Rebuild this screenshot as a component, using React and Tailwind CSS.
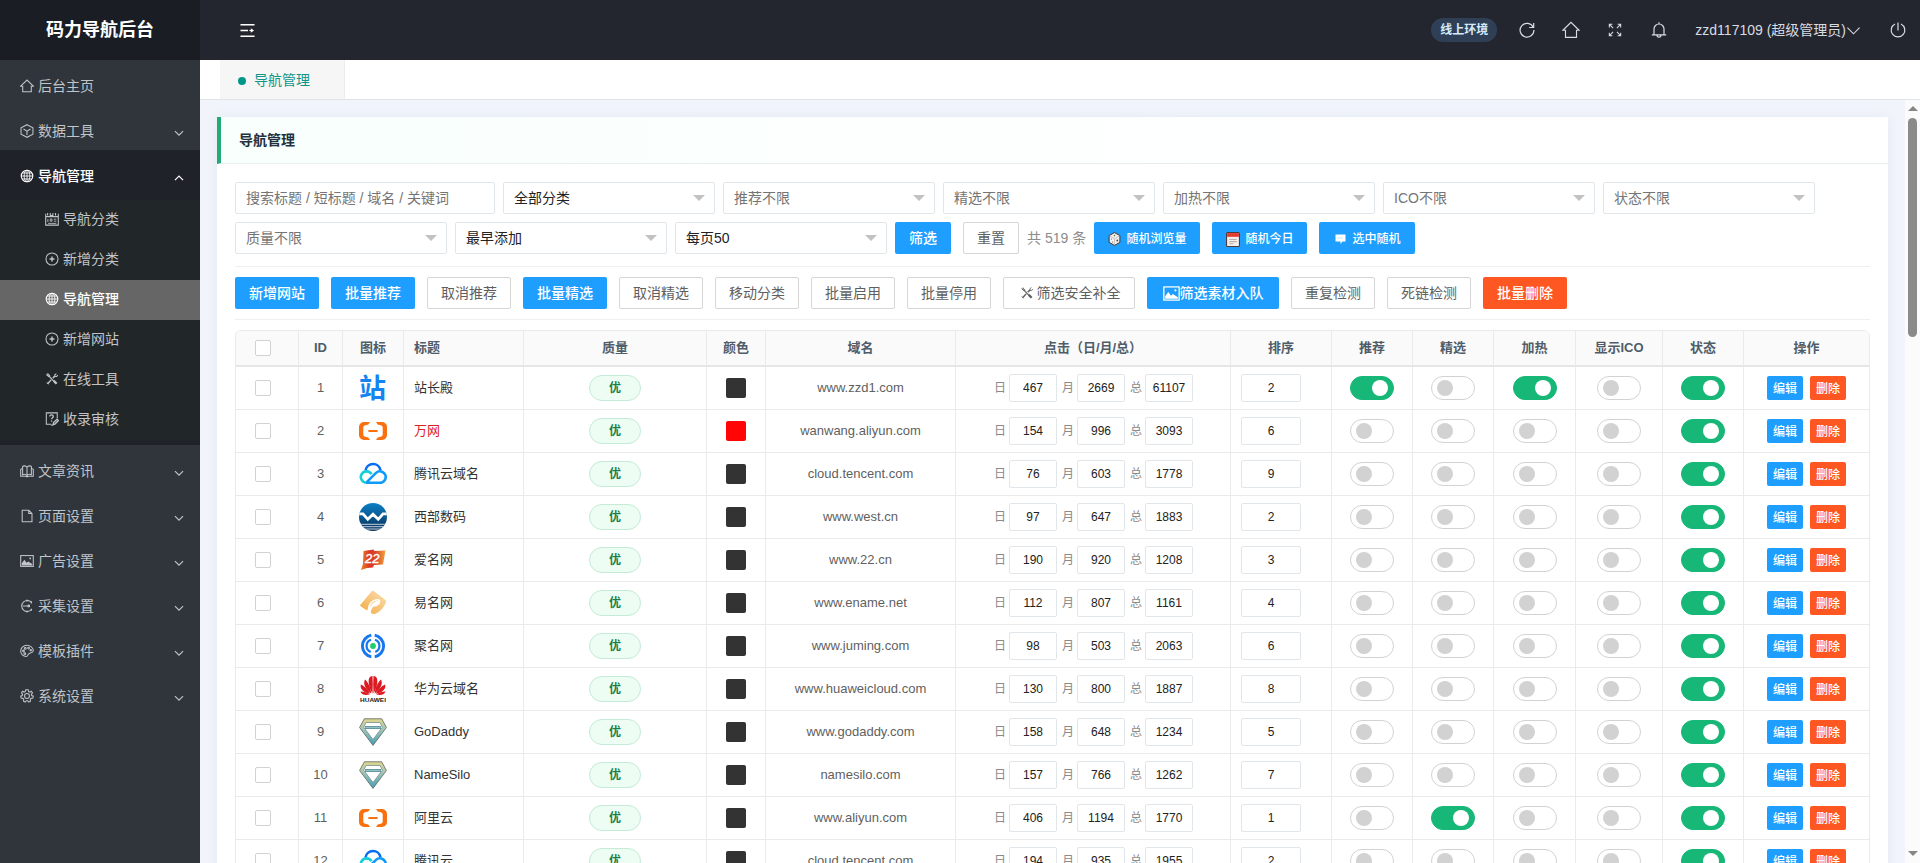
import { useState } from 'react';
import clsx from 'clsx';

function Svg({ size = 14, className, children, sw = 1.2 }) {
  return (
    <svg width={size} height={size} viewBox="0 0 16 16" fill="none" stroke="currentColor" strokeWidth={sw} className={clsx('shrink-0', className)}>
      {children}
    </svg>
  );
}

const icons = {
  home: <path d="M.8 8.2 8 1.2l7.200 7H12.900v6.300H3.100V8.200z" />,
  cube: <><path d="M8 .8 14.800 4.400v7.200L8 15.200 1.200 11.600V4.400z" /><path d="M4 5.800 8 8.100 12 5.800M8 8.100v4.400" /></>,
  globe: <><circle cx="8" cy="8" r="6.600" strokeWidth="1.300" /><ellipse cx="8" cy="8" rx="3.300" ry="6.600" strokeWidth="1" /><path d="M8 1.400v13.200M1.400 8h13.200M2.500 4.600h11M2.500 11.400h11" strokeWidth="1" /></>,
  template: <><path d="M.8 2v13h14.400V2M.8 5.300h14.400M3 1v3M6 1v3h3V1M12 1v3" /><path d="M3.300 8v3.500M6 8h2v2.500H6zM10 8.200h3M10 10.500h3M3.500 13H13" strokeWidth="1" /></>,
  add: <><circle cx="8" cy="8" r="6.900" /><path d="M8 5.200v5.600M5.200 8h5.600" strokeWidth="1.700" /></>,
  tools: <><path d="m4 4 8.500 9.200" strokeWidth="1.300" /><path d="m10 10 3.300 3.500" strokeWidth="2.600" /><path d="m7 9-4 4.500M9 7l2.300-2.500" strokeWidth="1.700" /><path d="M13 1.800 11.200 3.200l.3 1.800 1.900.1 1.200-1.700M2 3.300l1.300-1.300 2 2.300-.9.900zM2 12l2 2" /></>,
  audit: <><path d="M14 7V1H1.500v13H7" /><path d="M5.500 5.200c0-2.600 4-2.300 4 0 0 1.500-2 1.500-2 3.200M7.500 9.800v1.300" strokeWidth="1.500" /><path d="m9.300 14.500.5-2.500 4-3.800 1.500 1.600-4 4zM7 15h3" strokeWidth="1.500" /></>,
  book: <path d="M8 3.500C6.500 1.800 4 1.800 3 2.800v9.400c2-.8 3.800-.5 5 1.100zM8 3.500c1.500-1.700 4-1.700 5-.7v9.400c-2-.8-3.800-.5-5 1.100zM3 5 .8 6v8h5.700c.8 0 1 .8 1.500.8s.7-.8 1.500-.8h5.700V6L13 5" />,
  file: <path d="M2.500 1.500h7.500l3.700 3.700v9.300H2.500zM10 1.500v3.700h3.700" />,
  picture: <><rect x=".8" y="1.800" width="14.400" height="12.400" /><path d="M2 13v-2.500l3-4 2.500 3.500 1.800-1.500L14 11.500V13z" fill="currentColor" stroke="none" /><circle cx="11.700" cy="5" r="1" fill="currentColor" stroke="none" /></>,
  collect: <><path d="M13.500 4.500a6.300 6.300 0 1 0 0 7" /><path d="M3 8h7M8 .5v2.500M8 13v2.500M13 5V2.500M13 11v2.500" /><circle cx="10" cy="8" r="1" fill="currentColor" /></>,
  palette: <><path d="M8 1.500C3.500 1.500.8 4.500.8 8s2.700 6.300 6.200 6.300c2.500 0 1.500-2.500 3.200-3.200C12 10 15.200 10.500 15.200 7.500 15.200 4 11.500 1.500 8 1.500z" /><circle cx="4" cy="8" r="1" /><circle cx="6" cy="5" r="1" /><circle cx="9.800" cy="4.600" r="1" /><circle cx="12.300" cy="7" r=".8" /><circle cx="5.500" cy="11" r="1" /></>,
  gear: <><circle cx="8" cy="8" r="2.800" /><path d="m6.600.8-.4 2-1.500.7L3 2.500 1.700 4.400l1.300 1.600-.4 1.500L.8 8.200l.5 2.200 2 .3 1 1.300-.3 2 2 .9 1.300-1.500h1.400l1.300 1.500 2-.9-.3-2 1-1.300 2-.3.500-2.200-1.800-.7-.4-1.500 1.300-1.600L13 2.500l-1.700 1.100-1.500-.7-.4-2z" /></>,
  fold: <><path d="M.5 1.800h15M.5 8h8M.5 14.200h15" strokeWidth="1.700" /><path d="M10 8h2.500" strokeWidth="1.200" /><path d="m11.500 5.500 3.500 2.500-3.500 2.500z" fill="currentColor" stroke="none" /></>,
  refresh: <path d="M14.200 5.200A6.900 6.900 0 1 0 14.900 8M14.700 1v4.500h-4.500" />,
  full: <path d="M5.800 5.800 1.700 1.700M1.500 5V1.500H5M10.200 5.800l4.100-4.100M11 1.500h3.500V5M5.800 10.200l-4.100 4.100M1.500 11v3.500H5M10.200 10.200l4.100 4.100M14.500 11v3.500H11" />,
  bell: <path d="M.8 12.800h14.400M3 12.800V7a5 5 0 0 1 10 0v5.800M8 2V.3M6 13c0 2.800 4 2.800 4 0" />,
  power: <path d="M5 2A6.800 6.800 0 1 0 11 2M8 .5v8" />,
  down: <path d="m1.500 5 6.500 6.500L14.500 5" />,
  up: <path d="m1.500 11.500 6.500-6.500 6.500 6.500" />,
};

function Icon({ name, ...rest }) {
  return <Svg {...rest}>{icons[name]}</Svg>;
}

const subMenu = [
  ['template', '导航分类'],
  ['add', '新增分类'],
  ['globe', '导航管理'],
  ['add', '新增网站'],
  ['tools', '在线工具'],
  ['audit', '收录审核'],
];

const menu = [
  { icon: 'home', text: '后台主页' },
  { icon: 'cube', text: '数据工具', more: true },
  { icon: 'globe', text: '导航管理', more: true, children: subMenu },
  { icon: 'book', text: '文章资讯', more: true },
  { icon: 'file', text: '页面设置', more: true },
  { icon: 'picture', text: '广告设置', more: true },
  { icon: 'collect', text: '采集设置', more: true },
  { icon: 'palette', text: '模板插件', more: true },
  { icon: 'gear', text: '系统设置', more: true },
];

function Sidebar() {
  return (
    <aside className="w-[200px] shrink-0 bg-[#2f353b] flex flex-col">
      <div className="h-[60px] shrink-0 bg-[#1a1d24] text-white text-lg font-bold flex items-center justify-center pb-2.5 pt-2.5">码力导航后台</div>
      {menu.map(m => (
        <div key={m.text} className={clsx(m.children ? 'bg-[#1f2329] text-white font-medium pb-[5px]' : 'text-[#c1c4c8]')}>
          <div className="h-[45px] pt-[7px] pl-5 pr-4 flex items-center">
            <Icon name={m.icon} />
            <span className="ml-1 flex-1">{m.text}</span>
            {m.more && <Icon name={m.children ? 'up' : 'down'} size={10} sw={1.900} className="mt-[3px]" />}
          </div>
          {m.children && (
            <div className="mt-[5px] bg-[#212629]">
              {m.children.map(([icon, text]) => (
                <div key={text} className={clsx('h-10 pl-[45px] pb-0.5 flex items-center gap-1', text === '导航管理' ? 'bg-[#666] text-white' : 'text-[#c1c4c8] font-normal')}>
                  <Icon name={icon} />
                  <span>{text}</span>
                </div>
              ))}
            </div>
          )}
        </div>
      ))}
    </aside>
  );
}

function Header() {
  return (
    <header className="h-[60px] shrink-0 bg-[#23262e] text-[#d9dbe2] flex items-center pl-10 pr-[14px]">
      <Icon name="fold" size={15} className="text-white" />
      <div className="ml-auto flex items-center">
        <span className="h-6 w-[66px] rounded-full bg-[#2f4056] text-[#d6ebfb] text-xs font-bold flex items-center justify-center mr-[22px]">线上环境</span>
        <Icon name="refresh" size={16} className="mr-[27px]" />
        <Icon name="home" size={18} sw={1} className="mr-[28px]" />
        <Icon name="full" size={14} className="mr-[29px]" />
        <Icon name="bell" size={16} className="mr-[28px]" />
        <span>zzd117109 (超级管理员)</span>
        <Icon name="down" size={15} className="mr-[29px]" />
        <Icon name="power" size={16} />
      </div>
    </header>
  );
}

function SelectBox({ text, dark }) {
  return (
    <div className={clsx('w-[212px] h-8 border border-[#e0e6ea] rounded-[2px] bg-white px-2.5 flex items-center justify-between', dark ? 'text-[#222]' : 'text-[#757575]')}>
      <span>{text}</span>
      <span className="border-x-6 border-t-6 border-x-transparent border-t-[#c2c2c2] -mr-px" />
    </div>
  );
}

function Btn({ children, kind = 'plain', className }) {
  const kinds = {
    plain: 'bg-white border border-[#d6d6d6] text-[#5f5f5f]',
    blue: 'bg-[#1e9fff] text-white font-medium',
    red: 'bg-[#ff5722] text-white font-medium',
  };
  return <button type="button" className={clsx('h-8 rounded-[2px] flex items-center justify-center whitespace-nowrap', kinds[kind], className)}>{children}</button>;
}

function Dice() {
  return (
    <svg width="13" height="14" viewBox="0 0 12 14">
      <path d="M6 .6 11.400 3.600v6.800L6 13.400.6 10.400V3.600z" fill="#f4f1ee" stroke="#3d3434" strokeWidth="1" />
      <path d="M6 6.800v6M6 6.800 1 3.900M6 6.800l5-2.900" stroke="#b9b1ad" strokeWidth=".7" />
      <circle cx="6" cy="3.600" r=".8" fill="#666" /><circle cx="3" cy="7" r=".6" fill="#666" /><circle cx="4" cy="10" r=".6" fill="#666" /><circle cx="8.800" cy="8.500" r=".9" fill="#444" />
    </svg>
  );
}

function Calendar() {
  return (
    <svg width="14" height="15" viewBox="0 0 13 14">
      <rect x=".5" y=".5" width="12" height="13" rx="1" fill="#f5efec" stroke="#4b3a3a" />
      <rect x="1" y="1" width="11" height="3.500" fill="#e23b2e" />
      <path d="M3 7h7M3 9h7M3 11h4" stroke="#b9afab" strokeWidth="1" />
    </svg>
  );
}

function Bubble() {
  return (
    <svg width="13" height="12" viewBox="0 0 12 12">
      <path d="M1 1.500h10v7H8L6 11V8.500H1z" fill="#fff" /><path d="M3 5h6" stroke="#8fc9f7" strokeWidth=".8" strokeDasharray="1 1" />
    </svg>
  );
}

function Filters() {
  return (
    <div className="pb-3 border-b border-[#edf0f2] flex flex-wrap gap-2">
      <input placeholder="搜索标题 / 短标题 / 域名 / 关键词" className="w-[260px] h-8 border border-[#e0e6ea] rounded-[2px] px-2.5 placeholder:text-[#757575]" />
      <SelectBox text="全部分类" dark />
      <SelectBox text="推荐不限" />
      <SelectBox text="精选不限" />
      <SelectBox text="加热不限" />
      <SelectBox text="ICO不限" />
      <SelectBox text="状态不限" />
      <SelectBox text="质量不限" />
      <SelectBox text="最早添加" dark />
      <SelectBox text="每页50" dark />
      <Btn kind="blue" className="w-14">筛选</Btn>
      <Btn className="w-14 ml-1">重置</Btn>
      <span className="w-[59px] leading-8 text-[#8c8c8c] whitespace-nowrap">共 519 条</span>
      <Btn kind="blue" className="w-[106px] text-xs gap-[5px] pt-0.5 pl-px"><Dice />随机浏览量</Btn>
      <Btn kind="blue" className="w-[95px] ml-1 text-xs gap-[5px] pt-0.5 pl-px"><Calendar />随机今日</Btn>
      <Btn kind="blue" className="w-24 ml-1 text-xs gap-[5px] pt-0.5 pl-px"><Bubble />选中随机</Btn>
    </div>
  );
}

function Toolbar() {
  return (
    <div className="py-2.5 border-b border-[#edf0f2] flex gap-3">
      <Btn kind="blue" className="w-[84px]">新增网站</Btn>
      <Btn kind="blue" className="w-[84px]">批量推荐</Btn>
      <Btn className="w-[84px]">取消推荐</Btn>
      <Btn kind="blue" className="w-[84px]">批量精选</Btn>
      <Btn className="w-[84px]">取消精选</Btn>
      <Btn className="w-[84px]">移动分类</Btn>
      <Btn className="w-[84px]">批量启用</Btn>
      <Btn className="w-[84px]">批量停用</Btn>
      <Btn className="w-[132px] gap-[3px] pl-0.5"><Icon name="tools" sw={1} />筛选安全补全</Btn>
      <Btn kind="blue" className="w-[132px]"><Icon name="picture" size={17} />筛选素材入队</Btn>
      <Btn className="w-[84px]">重复检测</Btn>
      <Btn className="w-[84px]">死链检测</Btn>
      <Btn kind="red" className="w-[84px]">批量删除</Btn>
    </div>
  );
}

function Aliyun() {
  return (
    <svg width="28" height="28" viewBox="0 0 28 28" fill="#f8700f">
      <path d="M11 5H5a5 5 0 0 0-5 5v8a5 5 0 0 0 5 5h6l-1.700-2.600-3.700-1A1.900 1.900 0 0 1 4.300 17.600v-7.200a1.900 1.900 0 0 1 1.300-1.800l3.700-1zM17 5h6a5 5 0 0 1 5 5v8a5 5 0 0 1-5 5h-6l1.700-2.600 3.700-1a1.900 1.900 0 0 0 1.300-1.800v-7.200a1.900 1.900 0 0 0-1.300-1.800l-3.700-1zM9.400 12.900h9.200v2.200H9.400z" />
    </svg>
  );
}

function Tencent() {
  return (
    <svg width="28" height="28" viewBox="0 0 28 28" fill="none" strokeWidth="2.600">
      <path d="M6.500 10.500a7.600 7.600 0 0 1 15-.3" stroke="#0a6cf5" />
      <path d="M12.500 14.200A5.700 5.700 0 1 0 7 22.700" stroke="#12cfd8" />
      <path d="M7 22.700h14a5.700 5.700 0 1 0-4-9.800L7.500 22.300" stroke="#0f9bfa" />
    </svg>
  );
}

function West() {
  return (
    <svg width="28" height="28" viewBox="0 0 28 28">
      <defs>
        <linearGradient id="west" x2="0" y2="1"><stop offset="0" stopColor="#0a80c6" /><stop offset="1" stopColor="#0b2f57" /></linearGradient>
        <clipPath id="westClip"><circle cx="14" cy="14" r="14" /></clipPath>
      </defs>
      <g clipPath="url(#westClip)">
        <path d="M0 0h28v28H0z" fill="url(#west)" />
        <path d="M-1 10.800h5l4.800 5.500 5.200-5 5.200 5 4.800-5.500H29" fill="none" stroke="#fff" strokeWidth="2.800" />
        <path d="M0 21.300h28M0 23.700h28M0 26h28" stroke="#c3d3e2" strokeWidth="1" />
      </g>
    </svg>
  );
}

function Aiming() {
  return (
    <svg width="28" height="28" viewBox="0 0 28 28">
      <defs><linearGradient id="aiming"><stop offset="0" stopColor="#e9861d" /><stop offset=".35" stopColor="#dc3527" /><stop offset=".6" stopColor="#de452a" /><stop offset="1" stopColor="#eea53c" /></linearGradient></defs>
      <path d="m4.500 5 10-1.500 1 1.500L26.500 4.500 24 18.500l-9 .5-1 2.500-6 .5-6 2 2-6z" fill="url(#aiming)" />
      <text x="6" y="17" fontSize="13" fontStyle="italic" fill="#fff" stroke="#fff" strokeWidth=".4" fontFamily="Liberation Sans">22</text>
    </svg>
  );
}

function Ename() {
  return (
    <svg width="28" height="28" viewBox="0 0 28 28">
      <defs><linearGradient id="ename" x1="1" x2="0" y2="1"><stop offset="0" stopColor="#fae0b4" /><stop offset="1" stopColor="#f4a93f" /></linearGradient></defs>
      <path d="M.8 16.500 12.500 2.500q1.500-1.300 3 0L26.500 11q1.300 1.500 0 3.500-4 8.500-11 10.500-5 .5-3-4.500c1.500-3.500 4.500-5 8-6.500.5-3.500-6-2-8.500 2.500L8 21.500q-4-2.500-7.200-5z" fill="url(#ename)" />
      <path d="M9.500 21.500c0-7 4.500-10.800 8.700-10.800 4.300 0 2.300 5.300-3 6.300" fill="none" stroke="#fff" strokeWidth="1.600" />
    </svg>
  );
}

function Juming() {
  return (
    <svg width="28" height="28" viewBox="0 0 28 28" fill="none" stroke="#1677ee" strokeWidth="2.900">
      <path d="M12.300 3.200a11 11 0 0 0 0 21.600M15.700 3.200a11 11 0 0 1 0 21.600" />
      <path d="M12 7.800a6.500 6.500 0 0 0-.3 12.200M16 7.800a6.500 6.500 0 0 1 .3 12.200" strokeWidth="2.200" />
      <circle cx="14" cy="14" r="2.900" fill="#1fcf6b" stroke="none" />
    </svg>
  );
}

function Huawei() {
  return (
    <svg width="28" height="28" viewBox="0 0 28 28">
      <g fill="#dc1a22">
        <path d="M13.500 18.500C9.500 12 8.500 4 11 2q1-.8 2.500-.9.600 8 0 17.400zM14.500 18.500c4-6.500 5-14.500 2.500-16.500q-1-.8-2.500-.9-.6 8 0 17.400z" />
        <path d="M12.300 18.500C6.500 14 3.700 9 6 4.500c3 2.500 5.700 8 6.300 14zM15.700 18.500c5.800-4.500 8.600-9.500 6.300-14-3 2.500-5.700 8-6.300 14z" />
        <path d="M11.300 18.800C4.300 17.500.8 14 1.800 9.500c4.200 2 8 5.800 9.500 9.300zM16.700 18.800c7-1.300 10.500-4.800 9.500-9.300-4.200 2-8 5.800-9.500 9.300z" />
        <path d="M10.800 19.600c-5.500 1.200-8.300-.1-9.300-3.100 3.500 0 6.800 1.100 9.300 3.100zM17.200 19.600c5.500 1.200 8.300-.1 9.300-3.100-3.500 0-6.800 1.100-9.300 3.100z" />
      </g>
      <text x="1" y="27" fontSize="6" fontWeight="bold" fill="#222" textLength="26" lengthAdjust="spacingAndGlyphs" fontFamily="Liberation Sans">HUAWEI</text>
    </svg>
  );
}

function Gem() {
  return (
    <svg width="28" height="28" viewBox="0 0 28 28" fill="none" strokeLinejoin="round">
      <defs><linearGradient id="gem" gradientUnits="userSpaceOnUse" x1="0" y1="0" x2="0" y2="28"><stop offset="0" stopColor="#e8d88a" /><stop offset=".4" stopColor="#a5c6b6" /><stop offset="1" stopColor="#3f9dba" /></linearGradient></defs>
      <path d="M5.300.8h17.400L27.400 9.500 14 27.400.6 9.500z" fill="url(#gem)" stroke="#66736a" strokeWidth=".9" />
      <path d="M7 4.500h14l2.300 4.800L14 21.500 4.700 9.300z" fill="#fff" stroke="#76908c" strokeWidth=".8" />
      <path d="M6 9.500h16" stroke="#5d8f96" strokeWidth="3" />
      <path d="M6.500 9.500h15" stroke="#8fc3c8" strokeWidth="1.400" />
    </svg>
  );
}

function Zhan() {
  return <span className="text-[27px] leading-7 font-bold text-[#1683f2] block w-7 h-7 pt-px">站</span>;
}

const columns = [
  ['', 'w-[63px]'], ['ID', 'w-[44px]'], ['图标', 'w-[61px]'], ['标题', 'w-[120px]'], ['质量', 'w-[183px]'],
  ['颜色', 'w-[59px]'], ['域名', 'w-[190px]'], ['点击（日/月/总）', 'w-[275px]'], ['排序', 'w-[101px]'],
  ['推荐', 'w-[81px]'], ['精选', 'w-[81px]'], ['加热', 'w-[82px]'], ['显示ICO', 'w-[87px]'], ['状态', 'w-[81px]'], ['操作', 'w-[126px]'],
];

// id, logo, title, domain, day, month, total, sort, switches
const sites = [
  [1, Zhan, '站长殿', 'www.zzd1.com', 467, 2669, 61107, 2, ['top', 'hot']],
  [2, Aliyun, '万网', 'wanwang.aliyun.com', 154, 996, 3093, 6, []],
  [3, Tencent, '腾讯云域名', 'cloud.tencent.com', 76, 603, 1778, 9, []],
  [4, West, '西部数码', 'www.west.cn', 97, 647, 1883, 2, []],
  [5, Aiming, '爱名网', 'www.22.cn', 190, 920, 1208, 3, []],
  [6, Ename, '易名网', 'www.ename.net', 112, 807, 1161, 4, []],
  [7, Juming, '聚名网', 'www.juming.com', 98, 503, 2063, 6, []],
  [8, Huawei, '华为云域名', 'www.huaweicloud.com', 130, 800, 1887, 8, []],
  [9, Gem, 'GoDaddy', 'www.godaddy.com', 158, 648, 1234, 5, []],
  [10, Gem, 'NameSilo', 'namesilo.com', 157, 766, 1262, 7, []],
  [11, Aliyun, '阿里云', 'www.aliyun.com', 406, 1194, 1770, 1, ['best']],
  [12, Tencent, '腾讯云', 'cloud.tencent.com', 194, 935, 1955, 2, []],
];

function Toggle({ value }) {
  const [on, setOn] = useState(value);
  return (
    <button type="button" onClick={() => setOn(!on)} className={clsx('w-11 h-6 rounded-full border px-[5px] flex items-center', on ? 'bg-[#16b777] border-[#16b777] justify-end' : 'bg-white border-[#d2d2d2]')}>
      <span className={clsx('size-4 rounded-full', on ? 'bg-white' : 'bg-[#d2d2d2]')} />
    </button>
  );
}

function Check() {
  return <span className="size-4 border border-[#d2d2d2] rounded-[2px] bg-white mr-2" />;
}

function Num({ value, className }) {
  return <input defaultValue={value} className={clsx('h-7 border border-[#e0e6ea] rounded-[2px] bg-white text-center text-xs text-[#222]', className)} />;
}

function Cell({ i, className, children }) {
  return <div className={clsx(columns[i][1], 'shrink-0 border-r border-[#eaeaea] flex items-center', className || 'justify-center')}>{children}</div>;
}

function Row({ site }) {
  const [id, Logo, title, domain, day, month, total, sort, flags] = site;
  const red = title === '万网';
  return (
    <div className="h-[43px] shrink-0 border-b border-[#eaeaea] flex text-[13px] text-[#5f5f5f]">
      <Cell i={0}><Check /></Cell>
      <Cell i={1}>{id}</Cell>
      <Cell i={2}><Logo /></Cell>
      <Cell i={3} className={clsx('pl-2.5', red ? 'text-[#e02020]' : 'text-[#333]')}>{title}</Cell>
      <Cell i={4}><span className="w-[52px] h-[26px] rounded-full border border-[#c3ebd5] bg-[#edfdf4] text-[#1a7f46] text-xs font-bold flex items-center justify-center">优</span></Cell>
      <Cell i={5}><span className={clsx('size-5 rounded-[2px]', red ? 'bg-[#ff0505]' : 'bg-[#333]')} /></Cell>
      <Cell i={6}>{domain}</Cell>
      <Cell i={7} className="justify-center text-xs text-[#8a8a8a]">
        <span className="mr-[3px] ml-px">日</span><Num value={day} className="w-12 mr-[5px]" />
        <span className="mr-[3px]">月</span><Num value={month} className="w-12 mr-[5px]" />
        <span className="mr-[3px]">总</span><Num value={total} className="w-12" />
      </Cell>
      <Cell i={8} className="pl-2.5"><Num value={sort} className="w-[60px]" /></Cell>
      <Cell i={9}><Toggle value={flags.includes('top')} /></Cell>
      <Cell i={10}><Toggle value={flags.includes('best')} /></Cell>
      <Cell i={11}><Toggle value={flags.includes('hot')} /></Cell>
      <Cell i={12}><Toggle value={false} /></Cell>
      <Cell i={13}><Toggle value /></Cell>
      <Cell i={14} className="justify-center gap-[7px] text-xs text-white font-medium">
        <button type="button" className="w-9 h-6 pt-px rounded-[2px] bg-[#1e9fff]">编辑</button>
        <button type="button" className="w-9 h-6 pt-px rounded-[2px] bg-[#ff5722]">删除</button>
      </Cell>
    </div>
  );
}

function SiteTable() {
  return (
    <div className="mt-2.5 w-[1635px] border-t border-l border-[#e9e9e9] rounded-t-md overflow-hidden flex flex-col">
      <div className="h-9 shrink-0 bg-[#fafafa] border-b-2 border-[#e6e6e6] flex text-[13px] font-semibold text-[#4f5d6a]">
        {columns.map(([name], i) => (
          <Cell key={i} i={i} className={i === 3 ? 'pl-2.5' : ''}>{i ? <span>{name}</span> : <Check />}</Cell>
        ))}
      </div>
      {sites.map(s => <Row key={s[0]} site={s} />)}
    </div>
  );
}

function Scrollbar() {
  return (
    <div className="w-[15px] shrink-0 bg-[#fbfbfb] flex flex-col items-center pt-1.5 pb-[7px]">
      <span className="border-x-5 border-b-5 border-x-transparent border-b-[#868686]" />
      <span className="w-[9px] h-[219px] mt-[7px] rounded-full bg-[#8a8a8a]" />
      <span className="mt-auto border-x-5 border-t-5 border-x-transparent border-t-[#868686]" />
    </div>
  );
}

export default function App() {
  return (
    <div className="h-screen flex overflow-hidden text-sm font-['Liberation_Sans','Noto_Sans_CJK_SC',sans-serif]">
      <Sidebar />
      <div className="flex-1 min-w-0 flex flex-col">
        <Header />
        <div className="h-10 shrink-0 bg-white border-b border-[#e0e3e8] pl-5 flex">
          <div className="w-[125px] bg-[#f6f6f6] border-r border-[#ececec] text-[#0f9688] flex items-center pl-[18px]">
            <span className="size-2 rounded-full bg-[#009688] mr-2 mt-0.5" />导航管理
          </div>
        </div>
        <div className="flex-1 min-h-0 flex bg-[#f1f4fb]">
          <main className="flex-1 min-w-0 pl-[17px] pr-[17px] pt-[17px] overflow-hidden">
            <div className="bg-white shadow-[0_0_12px_rgba(30,60,100,0.06)] min-h-[900px]">
              <div className="h-[47px] border-l-4 border-l-[#22ab74] border-b border-b-[#e8edf0] bg-linear-to-r from-[#f8fffd] to-white to-70% pl-[18px] flex items-center font-bold text-[#223040]">导航管理</div>
              <div className="px-[18px] pt-[18px]">
                <Filters />
                <Toolbar />
                <SiteTable />
              </div>
            </div>
          </main>
          <Scrollbar />
        </div>
      </div>
    </div>
  );
}
